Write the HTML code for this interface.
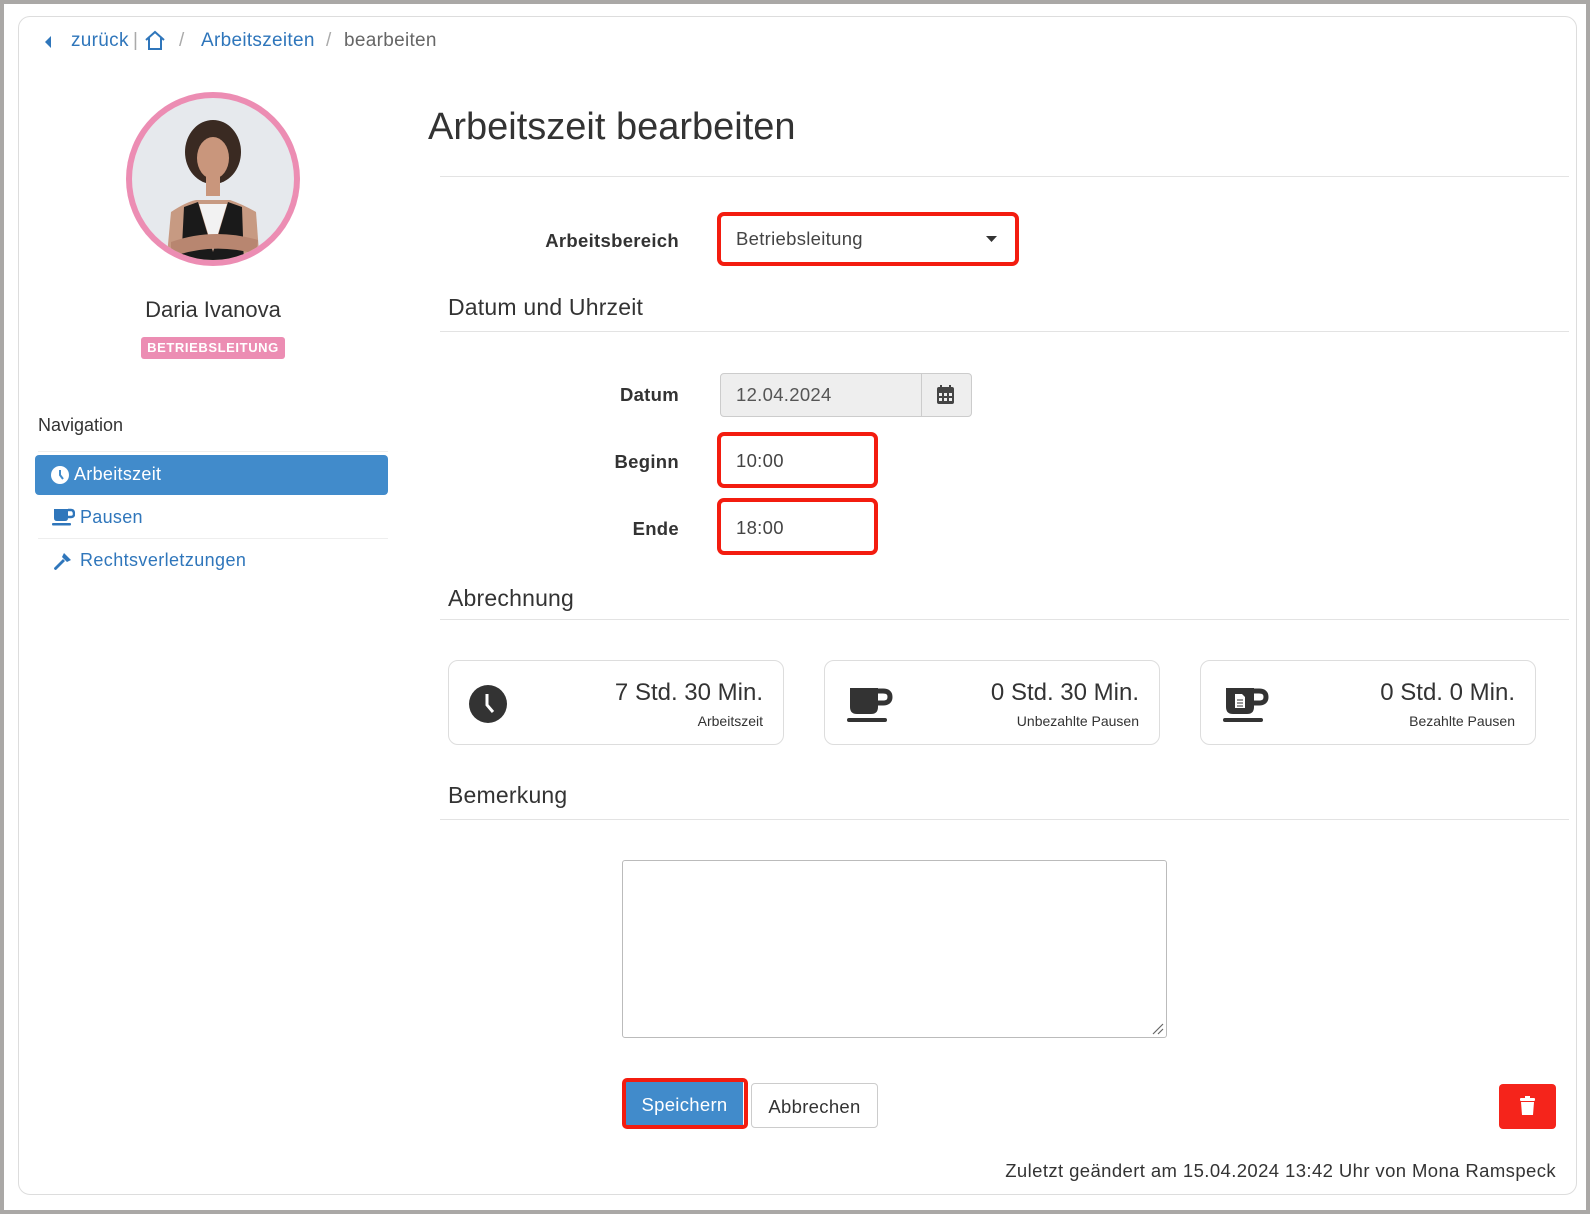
<!DOCTYPE html>
<html><head><meta charset="utf-8"><style>
*{box-sizing:border-box;margin:0;padding:0}
body{width:1590px;height:1214px;background:#aaa8a6;font-family:"Liberation Sans",sans-serif;color:#333;position:relative;overflow:hidden}
.frame{position:absolute;left:4px;top:4px;width:1582px;height:1206px;background:#fff}
.card{position:absolute;left:18px;top:16px;width:1559px;height:1179px;border:1px solid #ddd;border-radius:12px;background:#fff}
.a{position:absolute;white-space:nowrap}
.blue{color:#2f76bb}
.hr{position:absolute;height:1px;background:#e3e3e3}
.lbl{position:absolute;font-weight:bold;font-size:18.5px;text-align:right;width:200px;left:479px;letter-spacing:.3px}
.red{position:absolute;border:4px solid #f31c0f;border-radius:7px}
.inp{position:absolute;border:1px solid #ccc;border-radius:4px;background:#fff;font-size:18.5px;color:#444;padding-left:15px;display:flex;align-items:center;letter-spacing:.3px}
.sec{position:absolute;left:448px;font-size:23px;color:#333;letter-spacing:.2px}
.box{position:absolute;top:660px;height:85px;width:336px;border:1px solid #ddd;border-radius:10px}
.box .v{position:absolute;right:20px;top:18px;font-size:24px;color:#333}
.box .s{position:absolute;right:20px;top:52px;font-size:14px;color:#333}
.box svg{position:absolute;left:20px;top:24px}
</style></head><body>
<div class="frame"></div>
<div class="card"></div>
<svg class="a" style="left:43px;top:35px" width="10" height="14"><path d="M8 1 L2 7 L8 13Z" fill="#2f76bb"/></svg>
<div class="a blue" style="left:71px;top:30px;font-size:19px;letter-spacing:.3px">zurück</div>
<div class="a" style="left:133px;top:30px;font-size:19px;color:#aaa">|</div>
<svg class="a" style="left:144px;top:30px" width="22" height="21"><path d="M2 10 L11 2 L20 10 M5 8 V19 H17 V8" fill="none" stroke="#2f76bb" stroke-width="2"/></svg>
<div class="a" style="left:179px;top:30px;font-size:19px;color:#aaa">/</div>
<div class="a blue" style="left:201px;top:30px;font-size:19px;letter-spacing:.3px">Arbeitszeiten</div>
<div class="a" style="left:326px;top:30px;font-size:19px;color:#aaa">/</div>
<div class="a" style="left:344px;top:30px;font-size:19px;color:#666;letter-spacing:.3px">bearbeiten</div>
<svg class="a" style="left:126px;top:92px" width="174" height="174">
<defs><clipPath id="c"><circle cx="87" cy="87" r="81"/></clipPath></defs>
<circle cx="87" cy="87" r="87" fill="#ec8db3"/>
<g clip-path="url(#c)"><rect width="174" height="174" fill="#e6e9ed"/>
<path d="M40 174 L45 120 Q60 110 70 108 L104 108 Q116 112 130 120 L134 174Z" fill="#c79a82"/>
<path d="M55 174 L58 115 L72 110 L87 160 L102 110 L116 115 L118 174Z" fill="#1a1a1a"/>
<path d="M73 112 L87 158 L101 112Z" fill="#f2f2f2"/>
<path d="M45 150 Q87 135 132 148 L130 162 Q87 150 45 165Z" fill="#b88670"/>
<ellipse cx="87" cy="60" rx="28" ry="32" fill="#3a2a22"/>
<ellipse cx="87" cy="66" rx="16" ry="21" fill="#c9967c"/>
<rect x="80" y="82" width="14" height="22" fill="#c9967c"/></g>
</svg>
<div class="a" style="left:0;width:426px;text-align:center;top:297px;font-size:22px;color:#333">Daria Ivanova</div>
<div class="a" style="left:141px;top:337px;width:144px;height:22px;background:#ec8db3;border-radius:3px;color:#fff;font-weight:bold;font-size:13px;text-align:center;line-height:22px;letter-spacing:.6px">BETRIEBSLEITUNG</div>
<div class="a" style="left:38px;top:415px;font-size:18px">Navigation</div>
<div class="hr" style="left:38px;top:451px;width:350px;background:#eee"></div>
<div class="a" style="left:35px;top:455px;width:353px;height:40px;background:#418bcb;border-radius:4px"></div>
<svg class="a" style="left:51px;top:466px" width="18" height="18"><circle cx="9" cy="9" r="9" fill="#fff"/><path d="M9 4 V9 L12 13" stroke="#418bcb" stroke-width="2" fill="none"/></svg>
<div class="a" style="left:74px;top:464px;font-size:18px;color:#fff;letter-spacing:.3px">Arbeitszeit</div>
<svg class="a" style="left:51px;top:507px" width="24" height="20"><path d="M3 2 H17 V11 Q17 14 14 14 H6 Q3 14 3 11Z" fill="#2f76bb"/><path d="M17 3 H20 Q23 3 23 7 Q23 10 20 10 H17" fill="none" stroke="#2f76bb" stroke-width="2.4"/><rect x="1" y="16" width="19" height="2.5" rx="1" fill="#2f76bb"/></svg>
<div class="a blue" style="left:80px;top:507px;font-size:18px;letter-spacing:.3px">Pausen</div>
<div class="hr" style="left:38px;top:538px;width:350px;background:#eee"></div>
<svg class="a" style="left:52px;top:551px" width="22" height="20"><path d="M12 2 L19 9 L15 11 L10 6Z M11 8 L13 10 L4 19 Q2 19 2 17Z" fill="#2f76bb"/></svg>
<div class="a blue" style="left:80px;top:550px;font-size:18px;letter-spacing:.4px">Rechtsverletzungen</div>
<div class="a" style="left:428px;top:106px;font-size:38px;color:#333">Arbeitszeit bearbeiten</div>
<div class="hr" style="left:440px;top:176px;width:1129px"></div>
<div class="lbl" style="top:230px">Arbeitsbereich</div>
<div class="inp" style="left:721px;top:216px;width:294px;height:45px;border:none">Betriebsleitung</div>
<svg class="a" style="left:986px;top:235px" width="12" height="8"><path d="M0 1 H11 L5.5 7Z" fill="#333"/></svg>
<div class="red" style="left:717px;top:212px;width:302px;height:54px"></div>
<div class="sec" style="top:294px">Datum und Uhrzeit</div>
<div class="hr" style="left:440px;top:331px;width:1129px"></div>
<div class="lbl" style="top:384px">Datum</div>
<div class="inp" style="left:720px;top:373px;width:252px;height:44px;background:#eee;color:#555">12.04.2024</div>
<div class="a" style="left:921px;top:373px;width:1px;height:44px;background:#ccc"></div>
<svg class="a" style="left:937px;top:385px" width="17" height="19"><rect x="3" y="0" width="2" height="4" fill="#444"/><rect x="12" y="0" width="2" height="4" fill="#444"/><rect x="0" y="2" width="17" height="17" rx="2" fill="#444"/><g fill="#eee"><rect x="2" y="8" width="3" height="3"/><rect x="7" y="8" width="3" height="3"/><rect x="12" y="8" width="3" height="3"/><rect x="2" y="13" width="3" height="3"/><rect x="7" y="13" width="3" height="3"/><rect x="12" y="13" width="3" height="3"/></g></svg>
<div class="lbl" style="top:451px">Beginn</div>
<div class="inp" style="left:721px;top:437px;width:153px;height:48px;border:none">10:00</div>
<div class="red" style="left:717px;top:432px;width:161px;height:56px"></div>
<div class="lbl" style="top:518px">Ende</div>
<div class="inp" style="left:721px;top:503px;width:153px;height:49px;border:none">18:00</div>
<div class="red" style="left:717px;top:498px;width:161px;height:57px"></div>
<div class="sec" style="top:585px">Abrechnung</div>
<div class="hr" style="left:440px;top:619px;width:1129px"></div>
<div class="box" style="left:448px"><svg width="38" height="38"><circle cx="19" cy="19" r="19" fill="#333"/><path d="M18 9 V20 L24 27" stroke="#fff" stroke-width="3" fill="none"/></svg><div class="v">7 Std. 30 Min.</div><div class="s">Arbeitszeit</div></div>
<div class="box" style="left:824px"><svg width="48" height="38"><path d="M5 3 H33 V22 Q33 29 26 29 H12 Q5 29 5 22Z" fill="#333"/><path d="M32 6 H38 Q45 6 45 12 Q45 18 38 18 H32" fill="none" stroke="#333" stroke-width="5"/><rect x="2" y="33" width="40" height="4" rx="2" fill="#333"/></svg><div class="v">0 Std. 30 Min.</div><div class="s">Unbezahlte Pausen</div></div>
<div class="box" style="left:1200px"><svg width="48" height="38"><path d="M5 3 H33 V22 Q33 29 26 29 H12 Q5 29 5 22Z" fill="#333"/><path d="M32 6 H38 Q45 6 45 12 Q45 18 38 18 H32" fill="none" stroke="#333" stroke-width="5"/><rect x="2" y="33" width="40" height="4" rx="2" fill="#333"/><path d="M14 9 H21 L24 12 V23 H14Z" fill="#fff"/><path d="M16 15 H22 M16 18 H22 M16 21 H22" stroke="#333" stroke-width="1"/></svg><div class="v">0 Std. 0 Min.</div><div class="s">Bezahlte Pausen</div></div>
<div class="sec" style="top:782px">Bemerkung</div>
<div class="hr" style="left:440px;top:819px;width:1129px"></div>
<div class="a" style="left:622px;top:860px;width:545px;height:178px;border:1px solid #bbb;border-radius:3px"></div>
<svg class="a" style="left:1151px;top:1022px" width="13" height="13"><path d="M12 2 L2 12 M12 7 L7 12" stroke="#666" stroke-width="1.2"/></svg>
<div class="a" style="left:626px;top:1082px;width:117px;height:43px;background:#418bcb;color:#fff;font-size:18.5px;text-align:center;line-height:45px;letter-spacing:.3px">Speichern</div>
<div class="red" style="left:622px;top:1078px;width:126px;height:51px;border-radius:5px"></div>
<div class="a" style="left:751px;top:1083px;width:127px;height:45px;border:1px solid #ccc;border-radius:4px;font-size:18.5px;text-align:center;line-height:45px;color:#333;letter-spacing:.3px">Abbrechen</div>
<div class="a" style="left:1499px;top:1084px;width:57px;height:45px;background:#f5241b;border-radius:4px"></div>
<svg class="a" style="left:1519px;top:1096px" width="17" height="20"><rect x="1" y="2" width="15" height="3" rx="1" fill="#fff"/><rect x="6" y="0" width="5" height="3" fill="#fff"/><path d="M2 6 H15 L14 19 H3Z" fill="#fff"/></svg>
<div class="a" style="right:34px;top:1160px;font-size:18.5px;color:#333;letter-spacing:.4px">Zuletzt geändert am 15.04.2024 13:42 Uhr von Mona Ramspeck</div>
</body></html>
